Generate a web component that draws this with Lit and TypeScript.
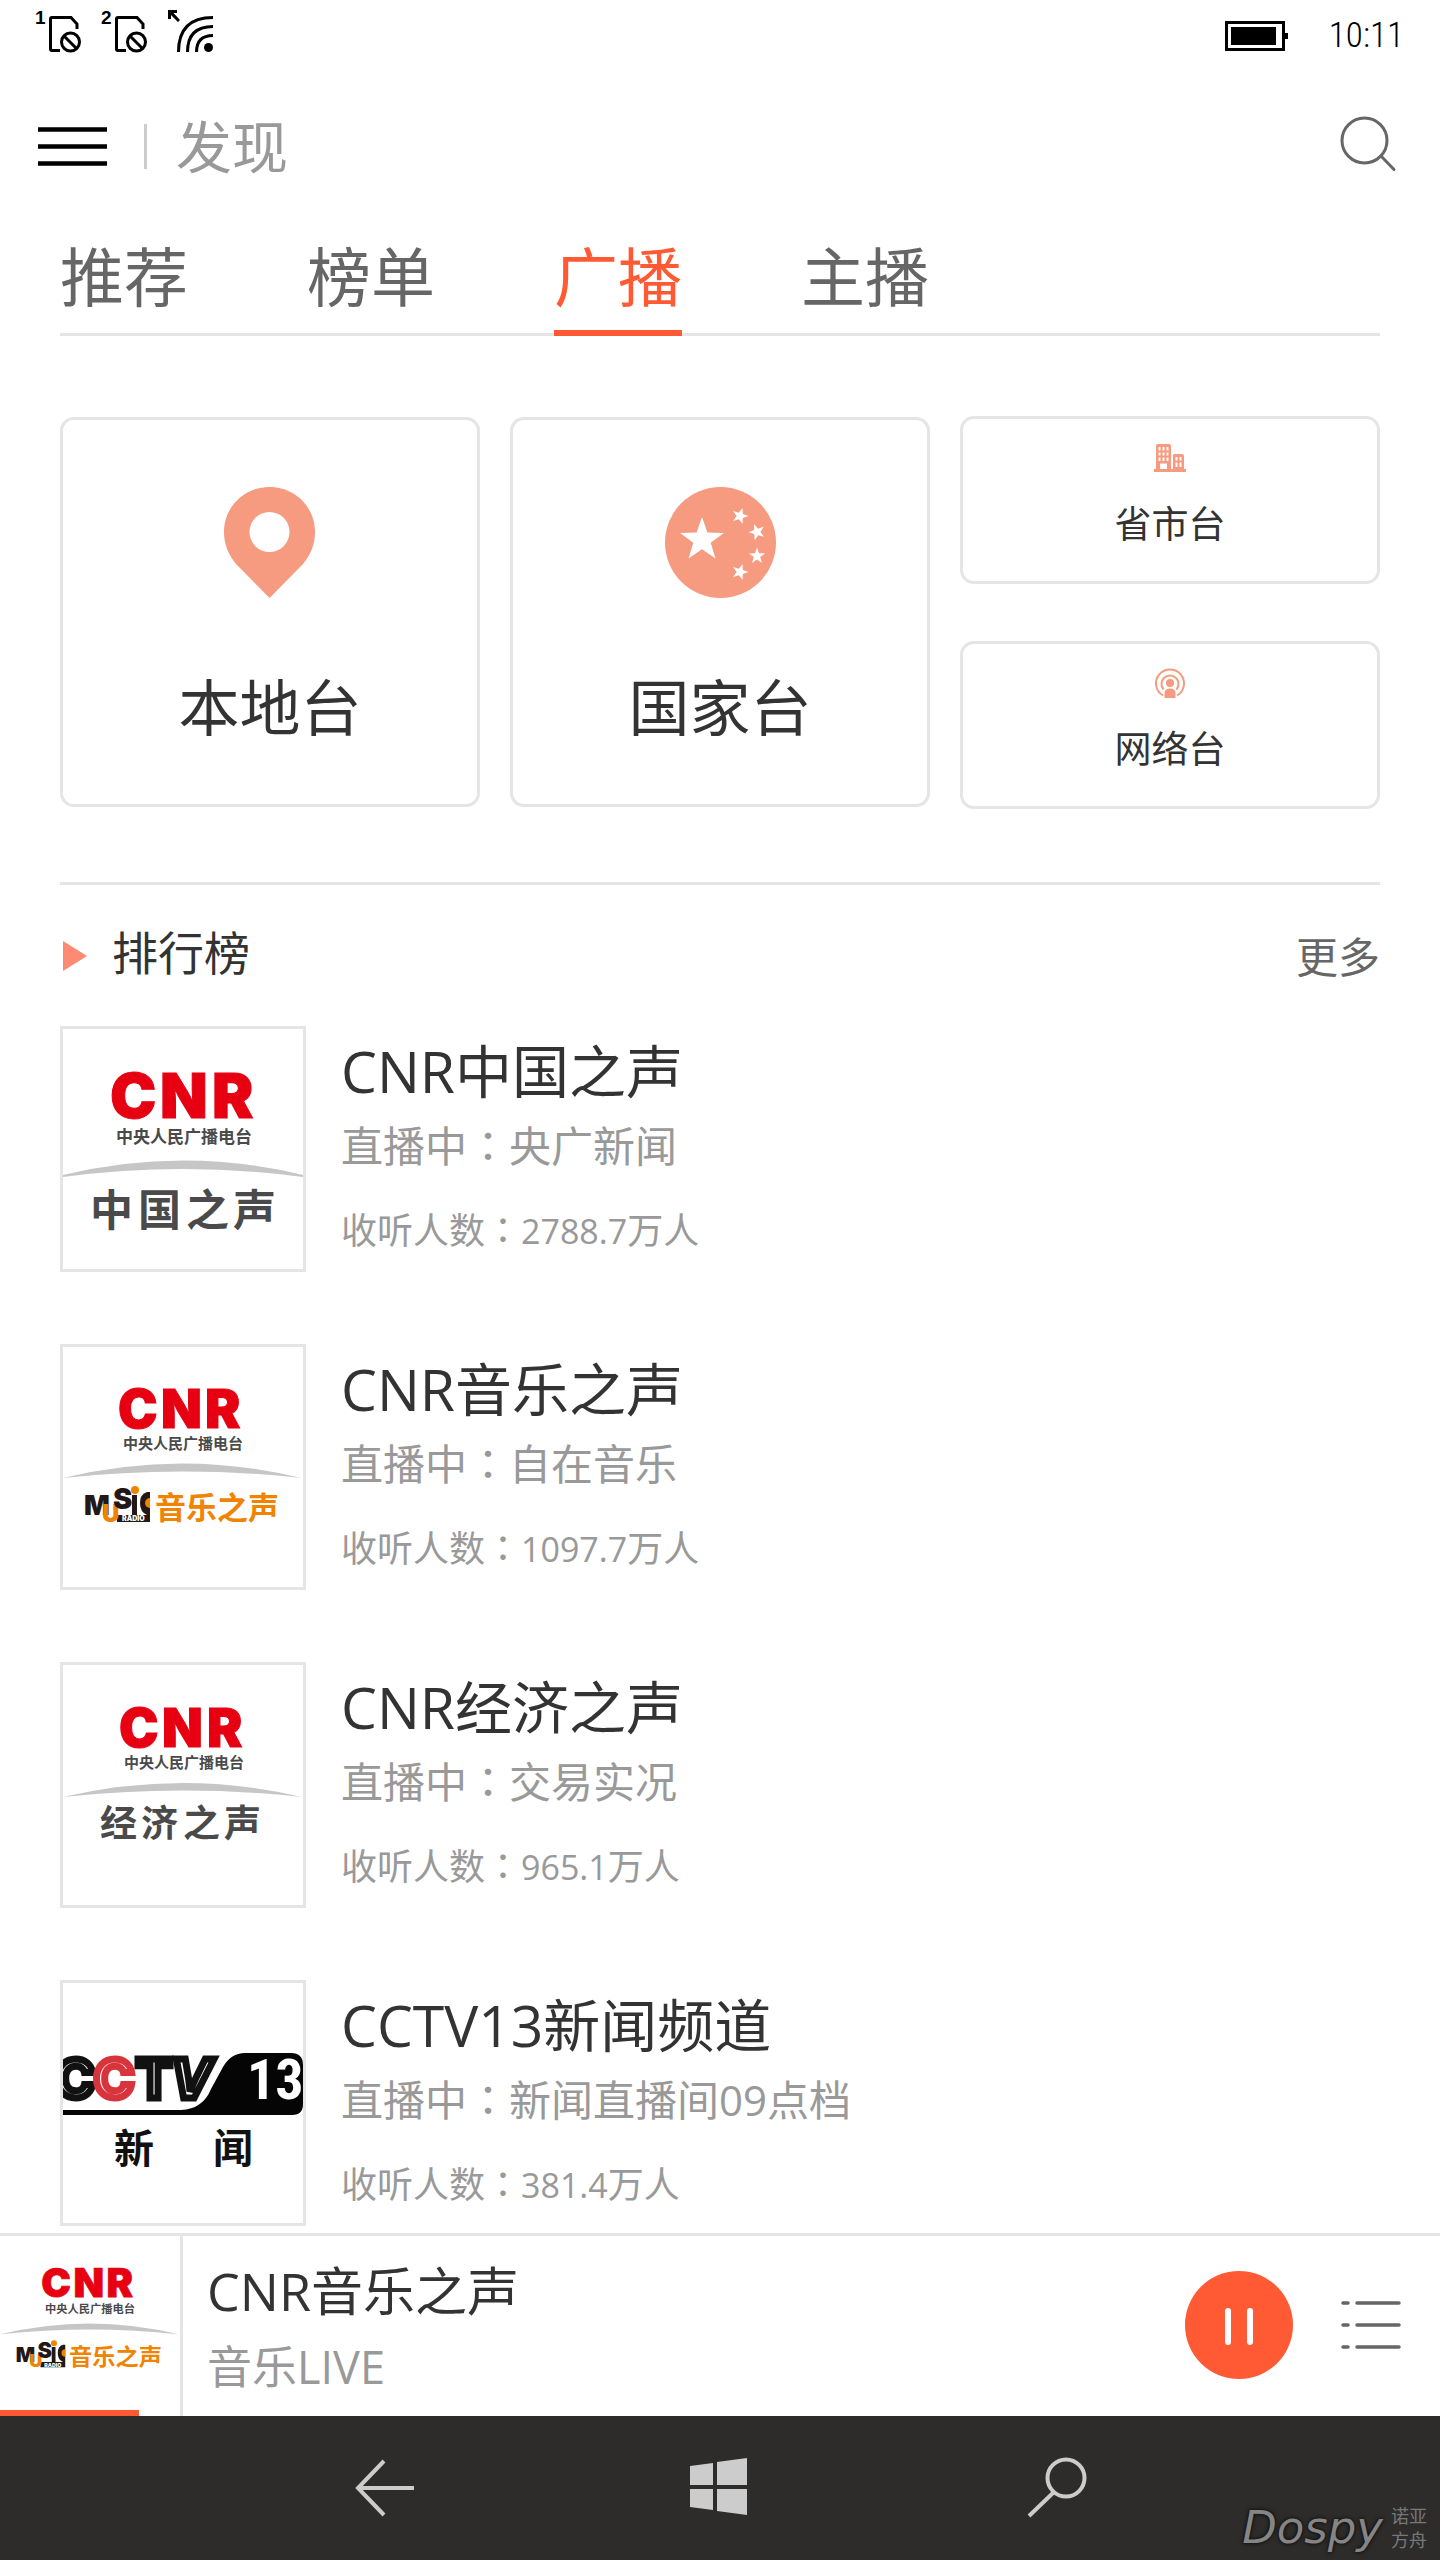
import { LitElement, html, css, svg, nothing } from "lit";
import { customElement, property, state } from "lit/decorators.js";
import { classMap } from "lit/directives/class-map.js";

type Logo = "china" | "music" | "economy" | "cctv";

interface Station {
  logo: Logo;
  name: string;
  show: string;
  listeners: string;
}

const STATIONS: Station[] = [
  { logo: "china", name: "CNR中国之声", show: "央广新闻", listeners: "2788.7" },
  { logo: "music", name: "CNR音乐之声", show: "自在音乐", listeners: "1097.7" },
  { logo: "economy", name: "CNR经济之声", show: "交易实况", listeners: "965.1" },
  { logo: "cctv", name: "CCTV13新闻频道", show: "新闻直播间09点档", listeners: "381.4" },
];

const TABS = ["推荐", "榜单", "广播", "主播"];

/* Five-pointed star around a centre, turned by `turn` degrees. */
function star(cx: number, cy: number, r: number, turn = 0) {
  const points: string[] = [];
  for (let i = 0; i < 10; i++) {
    const radius = i % 2 ? r * 0.4 : r;
    const angle = ((i * 36 - 90 + turn) * Math.PI) / 180;
    points.push(`${(cx + radius * Math.cos(angle)).toFixed(1)},${(cy + radius * Math.sin(angle)).toFixed(1)}`);
  }
  return svg`<polygon points=${points.join(" ")} fill="#fff"></polygon>`;
}

@customElement("station-logo")
export class StationLogo extends LitElement {
  @property() logo: Logo = "china";

  static styles = css`
    :host { display: block; }
    svg { display: block; width: 100%; height: auto; }
    .cnr { font-family: Inter, "Open Sans", sans-serif; font-weight: 900; fill: #e60012; stroke: #e60012; stroke-width: 1px; }
    .han { font-family: "Noto Sans CJK SC", sans-serif; font-weight: 700; fill: #4a4a4a; }
    .orange { fill: #f08300; }
    .black { fill: #111; }
    .white { fill: #fff; }
    .music { font-family: Inter, "Open Sans", sans-serif; font-weight: 900; fill: #231815; }
    .outlined { font-family: Inter, "Open Sans", sans-serif; font-weight: 700; font-size: 54px; fill: #fff; stroke: #111; stroke-width: 7px; }
    .red { stroke: #d7343c; }
    .thirteen { font-family: "Roboto Condensed", "Liberation Sans Narrow", sans-serif; font-weight: 700; font-size: 56px; fill: #fff; }
  `;

  render() {
    const art =
      this.logo === "china" ? this.china() :
      this.logo === "music" ? this.music() :
      this.logo === "economy" ? this.economy() : this.cctv();
    return html`<svg viewBox="0 0 240 240" aria-hidden="true">${art}</svg>`;
  }

  private china() {
    return svg`
      <text class="cnr" x="47 97 149" y="89" font-size="62">CNR</text>
      <text class="han" x="53" y="114" font-size="17">中央人民广播电台</text>
      <path d="M0 146Q120 117 240 146V148Q120 132 0 148Z" fill="#c6c6c6"></path>
      <text class="han" x="27 75 123 170" y="197" font-size="43">中国之声</text>`;
  }

  private music() {
    return svg`
      <text class="cnr" x="55 98 142" y="81" font-size="53">CNR</text>
      <text class="han" x="60" y="102" font-size="15">中央人民广播电台</text>
      <path d="M0 131Q120 102 238 131Q120 118 0 131Z" fill="#c6c6c6"></path>
      <rect x="54" y="168" width="33" height="7" fill="#231815"></rect>
      <rect x="69" y="148" width="5" height="20" fill="#231815"></rect>
      <circle cx="72" cy="143" r="4" fill="#f08300"></circle>
      <path d="M87 145V168H84Q77 165 77 156T84 145Z" fill="#231815"></path>
      <path d="M87 151A5 5 0 0 0 87 161Z" fill="#f08300"></path>
      <text class="music" font-size="27"><tspan x="21" y="168">M</tspan><tspan class="orange" x="39" y="175" font-size="24">U</tspan><tspan x="50" y="162" font-size="29">S</tspan><tspan class="white" x="59" y="174" font-size="7">RADIO</tspan></text>
      <text class="han orange" x="92" y="172" font-size="31">音乐之声</text>`;
  }

  private economy() {
    return svg`
      <text class="cnr" x="56 99 144" y="82" font-size="53">CNR</text>
      <text class="han" x="61" y="103" font-size="15">中央人民广播电台</text>
      <path d="M0 132Q120 104 239 132Q120 119 0 132Z" fill="#c6c6c6"></path>
      <text class="han" x="37 78 120 161" y="172" font-size="37">经济之声</text>`;
  }

  private cctv() {
    return svg`
      <path d="M0 127H118Q140 126 148 106L160 84Q168 70 182 70H228Q240 70 240 82V121Q240 132 229 132H0Z" fill="#050505"></path>
      <text class="outlined" x="-8" y="115">C</text>
      <text class="outlined red" x="31" y="115">C</text>
      <text class="outlined" x="73" y="115">T</text>
      <text class="outlined" x="108" y="115" font-style="italic">V</text>
      <text class="thirteen" x="184" y="116">13</text>
      <text class="han black" x="51 150" y="180" font-size="40" font-weight="900">新闻</text>`;
  }
}

@customElement("app-root")
export class AppRoot extends LitElement {
  @state() private tab = "广播";
  @state() private playing = true;
  @state() private progress = 77;

  static styles = css`
    :host {
      display: flex;
      flex-direction: column;
      min-height: 100vh;
      background: #fff;
      color: #333;
      font-family: "Open Sans", "Noto Sans CJK SC", sans-serif;
    }
    * { box-sizing: border-box; }
    svg { display: block; flex: none; overflow: visible; }
    button { font: inherit; color: inherit; background: none; border: 0; padding: 0; margin: 0; cursor: pointer; }
    a { color: inherit; text-decoration: none; }
    h1, h2, h3, p, ul { margin: 0; padding: 0; font-weight: 400; list-style: none; }

    .status { display: flex; align-items: center; height: 72px; padding: 0 36px; color: #000; }
    .signals { display: flex; gap: 20px; flex: 1; }
    .badge { font-family: "Liberation Sans", sans-serif; font-weight: 700; font-size: 19px; }
    .clock { margin-left: 41px; font-family: "Roboto Condensed", "Liberation Sans Narrow", "Open Sans", sans-serif; font-size: 35px; font-weight: 300; line-height: 72px; }

    .header { display: flex; align-items: center; height: 148px; padding: 0 44px 0 38px; }
    .rule { width: 3px; height: 45px; margin: 0 29px 0 37px; background: #ccc; }
    .title { flex: 1; font-size: 56px; line-height: 80px; color: #999; }
    .search { padding-bottom: 5px; }

    main { flex: 1; padding: 0 60px; }
    .tabs { display: flex; gap: 119px; border-bottom: 3px solid #e5e5e5; }
    .tab { height: 116px; margin-bottom: -3px; padding-top: 4px; border-bottom: 6px solid transparent; font-size: 64px; line-height: 90px; color: #666; }
    .tab.active { color: #ff5a33; border-color: #ff5a33; }

    .cards { display: grid; grid-template-columns: repeat(3, 1fr); column-gap: 30px; margin-top: 80px; padding-bottom: 73px; border-bottom: 3px solid #e5e5e5; }
    .card { display: flex; flex-direction: column; align-items: center; border: 3px solid #e5e5e5; border-radius: 14px; }
    .large { margin: 1px 0 2px; padding-top: 67px; font-size: 61px; line-height: 88px; gap: 66px; }
    .stack { display: grid; gap: 57px; }
    .small { height: 168px; padding-top: 24px; font-size: 37px; line-height: 52px; gap: 25px; }

    .heading { display: flex; align-items: center; height: 134px; margin-bottom: 7px; }
    .arrow { margin: 8px 25px 0 3px; }
    .rank { flex: 1; font-size: 46px; line-height: 64px; }
    .more { padding-top: 10px; font-size: 42px; line-height: 60px; color: #666; }

    .stations { display: grid; gap: 72px; padding-bottom: 7px; }
    .station { display: flex; }
    .art { flex: none; width: 246px; border: 3px solid #e5e5e5; }
    .info { min-width: 0; padding: 5px 0 0 35px; color: #999; }
    .name { font-size: 57px; line-height: 80px; color: #333; }
    .show { margin-top: 3px; font-size: 42px; line-height: 60px; }
    .count { margin-top: 28px; font-size: 36px; line-height: 48px; }
    .number { font-size: 34px; }
    .colon { font-family: "Noto Sans CJK TC", sans-serif; }

    .player { display: flex; align-items: center; height: 183px; border-top: 3px solid #e5e5e5; padding: 0 39px 2px 0; }
    .cover { position: relative; flex: none; align-self: flex-start; width: 183px; height: 180px; border-right: 3px solid #e5e5e5; }
    .bar { position: absolute; left: 0; bottom: 0; height: 6px; background: #ff5a33; }
    .now { flex: 1; min-width: 0; padding: 8px 0 0 24px; }
    .track { font-size: 52px; line-height: 76px; }
    .live { font-size: 45px; line-height: 76px; color: #999; }
    .pause { margin-right: 48px; }

    .system { display: grid; grid-template-columns: repeat(3, auto); justify-content: center; align-items: center; column-gap: 277px; height: 144px; padding-bottom: 3px; background: #2d2c2b; position: relative; }
    .mark { position: absolute; right: 13px; bottom: 8px; display: flex; align-items: center; gap: 8px; color: #858585; }
    .dospy { font-family: "DejaVu Sans", sans-serif; font-style: italic; font-size: 45px; line-height: 48px; text-shadow: 0 0 4px #000; }
    .ark { width: 36px; font-size: 18px; line-height: 24px; color: #777; }
  `;

  private sim(label: string) {
    return html`<svg width="46" height="52" viewBox="0 0 46 52" role="img" aria-label="SIM ${label}">
      <text class="badge" x="-1" y="14">${label}</text>
      <path d="M24 40.500H16Q14.500 40.500 14.500 39V9Q14.500 7.500 16 7.500H35L41 14V19" fill="none" stroke="#000" stroke-width="3"></path>
      <circle cx="34.500" cy="32" r="9" fill="#fff" stroke="#000" stroke-width="3"></circle>
      <path d="M28 26L40 38" stroke="#000" stroke-width="3"></path>
    </svg>`;
  }

  private statusBar() {
    return html`<div class="status">
      <div class="signals">
        ${this.sim("1")}${this.sim("2")}
        <svg width="46" height="52" viewBox="0 0 46 52" role="img" aria-label="WLAN">
          <path d="M0 0H9V3H5.500L12 10L10 12L3 5V9H0Z"></path>
          <path d="M10.500 42Q10.500 7.500 45 7.500M19.500 42Q19.500 16.500 45 16.500M28.500 42Q28.500 25.500 45 25.500" fill="none" stroke="#000" stroke-width="3"></path>
          <circle cx="40.500" cy="37.500" r="4.500"></circle>
        </svg>
      </div>
      <svg width="63" height="30" viewBox="0 0 63 30" role="img" aria-label="电量">
        <rect x="1.500" y="1.500" width="57" height="27" fill="none" stroke="#000" stroke-width="3"></rect>
        <rect x="6" y="6" width="45" height="18"></rect>
        <rect x="60" y="12" width="3" height="6"></rect>
      </svg>
      <time class="clock">10:11</time>
    </div>`;
  }

  private header() {
    return html`<header class="header">
      <button aria-label="菜单">
        <svg width="69" height="39" viewBox="0 0 69 39"><path d="M0 2.500H69M0 19.500H69M0 36.500H69" stroke="#000" stroke-width="4.500"></path></svg>
      </button>
      <span class="rule"></span>
      <h1 class="title">发现</h1>
      <button class="search" aria-label="搜索">
        <svg width="56" height="56" viewBox="0 0 56 56" fill="none" stroke="#666" stroke-width="3" stroke-linecap="round">
          <circle cx="24.500" cy="24.500" r="22.500"></circle><path d="M41 40L54 53.500"></path>
        </svg>
      </button>
    </header>`;
  }

  private cards() {
    return html`<section class="cards">
      <button class="card large">
        <svg width="111" height="111" viewBox="0 0 111 111">
          <path fill-rule="evenodd" fill="#f69a80" d="M54.500 0C80 0 100 20 100 45C100 57 96 67 88 77L54.500 111L21 77C13 67 9 57 9 45C9 20 29 0 54.500 0ZM54.500 25a20 20 0 1 0 0 40a20 20 0 1 0 0-40Z"></path>
        </svg>
        <span>本地台</span>
      </button>
      <button class="card large">
        <svg width="111" height="111" viewBox="0 0 111 111">
          <circle cx="55.500" cy="55.500" r="55.500" fill="#f69a80"></circle>
          ${star(37, 53, 23)}${star(75, 29, 8.5, 18)}${star(92, 45, 8.5, -20)}${star(92, 69, 8.5)}${star(75, 85, 8.5, 18)}
        </svg>
        <span>国家台</span>
      </button>
      <div class="stack">
        <button class="card small">
          <svg width="32" height="30" viewBox="0 0 32 30">
            <path fill-rule="evenodd" fill="#f69a80" d="M2 3Q2 1 4 1H15Q17 1 17 3V26H19V12Q19 11 21 11H28Q30 11 30 13V26H32V29H0V26H2ZM4.500 4V7.500H6.500V4ZM8.500 4V7.500H10.500V4ZM12.500 4V7.500H14.500V4ZM4.500 9.500V12.500H6.500V9.500ZM8.500 9.500V12.500H10.500V9.500ZM12.500 9.500V12.500H14.500V9.500ZM4.500 14.500V18H6.500V14.500ZM8.500 14.500V18H10.500V14.500ZM12.500 14.500V18H14.500V14.500ZM6 20.500V26H13V20.500ZM21.500 14V17.500H23.500V14ZM25.500 14V17.500H27.500V14ZM21.500 19.500V24H23.500V19.500ZM25.500 19.500V24H27.500V19.500Z"></path>
          </svg>
          <span>省市台</span>
        </button>
        <button class="card small">
          <svg width="30" height="30" viewBox="0 0 30 30" fill="none" stroke="#f69a80" stroke-width="2">
            <path d="M8 27.500A14 14 0 1 1 22 27.500"></path>
            <path d="M8.500 21.500A8.500 8.500 0 1 1 21.500 21.500"></path>
            <circle cx="15" cy="15" r="4" fill="#f69a80" stroke="none"></circle>
            <path d="M9.500 30V25Q9.500 20.500 15 20.500T20.500 25V30Z" fill="#f69a80" stroke="none"></path>
          </svg>
          <span>网络台</span>
        </button>
      </div>
    </section>`;
  }

  private station(item: Station) {
    return html`<li>
      <a class="station" href="#${item.logo}">
        <station-logo class="art" logo=${item.logo}></station-logo>
        <div class="info">
          <h3 class="name">${item.name}</h3>
          <p class="show">直播中<span class="colon">：</span>${item.show}</p>
          <p class="count">收听人数<span class="colon">：</span><span class="number">${item.listeners}</span>万人</p>
        </div>
      </a>
    </li>`;
  }

  private player() {
    return html`<section class="player">
      <div class="cover">
        <station-logo logo="music"></station-logo>
        <div class="bar" role="progressbar" aria-label="播放进度" aria-valuenow=${this.progress} style="width:${this.progress}%"></div>
      </div>
      <div class="now">
        <p class="track">CNR音乐之声</p>
        <p class="live">音乐LIVE</p>
      </div>
      <button class="pause" aria-label=${this.playing ? "暂停" : "播放"} @click=${() => (this.playing = !this.playing)}>
        <svg width="108" height="108" viewBox="0 0 108 108">
          <circle cx="54" cy="54" r="54" fill="#ff5a33"></circle>
          ${this.playing
            ? svg`<path d="M43 40V71M65 40V71" stroke="#fff" stroke-width="6" stroke-linecap="round"></path>`
            : svg`<path d="M43 34L75 54L43 74Z" fill="#fff"></path>`}
        </svg>
      </button>
      <button aria-label="播放列表">
        <svg width="60" height="48" viewBox="0 0 60 48">
          <path d="M2 2H7M16 2H58M2 24H7M16 24H58M2 46H7M16 46H58" stroke="#666" stroke-width="3.500" stroke-linecap="round"></path>
        </svg>
      </button>
    </section>`;
  }

  private system() {
    return html`<footer class="system">
      <button aria-label="返回">
        <svg width="60" height="60" viewBox="0 0 60 60" fill="none" stroke="#ccc" stroke-width="4"><path d="M61 31H5M31 4L5 31L31 58"></path></svg>
      </button>
      <button aria-label="开始">
        <svg width="60" height="57" viewBox="0 0 60 57" fill="#ccc"><path d="M0 8L23 5V27H0ZM27 4L57 0V27H27ZM0 31H23V52L0 49ZM27 31H57V57L27 53Z"></path></svg>
      </button>
      <button aria-label="系统搜索">
        <svg width="60" height="60" viewBox="0 0 60 60" fill="none" stroke="#ccc" stroke-width="4"><circle cx="39" cy="21" r="18.500"></circle><path d="M27 35L2 59"></path></svg>
      </button>
      <div class="mark"><span class="dospy">Dospy</span><span class="ark">诺亚方舟</span></div>
    </footer>`;
  }

  render() {
    return html`
      ${this.statusBar()}
      ${this.header()}
      <main>
        <nav class="tabs">
          ${TABS.map((name) => html`<button
            class=${classMap({ tab: true, active: name === this.tab })}
            aria-current=${name === this.tab ? "page" : nothing}
            @click=${() => (this.tab = name)}
          >${name}</button>`)}
        </nav>
        ${this.cards()}
        <div class="heading">
          <svg class="arrow" width="24" height="30" viewBox="0 0 24 30"><path d="M0 0L24 15L0 30Z" fill="#ff8a73"></path></svg>
          <h2 class="rank">排行榜</h2>
          <a class="more" href="#more">更多</a>
        </div>
        <ul class="stations">${STATIONS.map((item) => this.station(item))}</ul>
      </main>
      ${this.player()}
      ${this.system()}
    `;
  }
}
